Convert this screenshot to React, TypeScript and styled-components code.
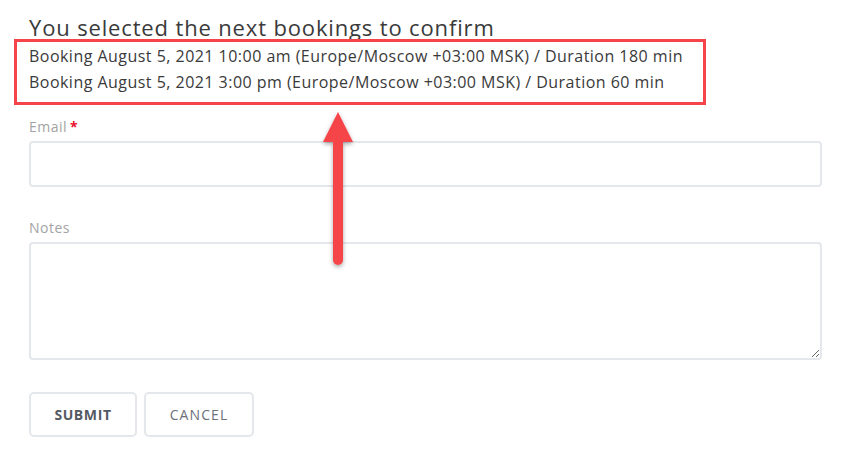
import React from "react";
import styled, { createGlobalStyle } from "styled-components";

const Global = createGlobalStyle`
  html, body { margin: 0; padding: 0; background: #ffffff; }
  body { font-family: "Open Sans", "Liberation Sans", sans-serif; color: #333; }
  * { box-sizing: border-box; }
`;

const Page = styled.div`
  position: relative;
  width: 843px;
  height: 451px;
  padding: 0 21px 0 29px;
  overflow: hidden;
`;

const Title = styled.h2`
  margin: 13px 0 0;
  font-size: 22px;
  line-height: 28px;
  font-weight: 400;
  letter-spacing: 0.85px;
  color: #3a3a3a;
`;

const Bookings = styled.div`
  position: relative;
  margin-top: 3px;
`;

const BookingLine = styled.div`
  font-size: 16px;
  line-height: 25.5px;
  letter-spacing: 0.47px;
  color: #3a3a3a;
  white-space: nowrap;
`;

const Highlight = styled.div`
  position: absolute;
  left: -15px;
  top: -5px;
  width: 692px;
  height: 66px;
  border: 3px solid #f5444a;
  pointer-events: none;
`;

const Label = styled.label<{ $gap: number }>`
  display: block;
  margin-top: ${(p) => p.$gap}px;
  font-size: 14px;
  line-height: 20px;
  letter-spacing: 0.5px;
  color: #a3a3a3;
`;

const Required = styled.span`
  color: #e8112d;
  font-weight: 700;
  margin-left: 3px;
`;

const TextInput = styled.input`
  display: block;
  width: 100%;
  height: 46px;
  margin-top: 4px;
  border: 2px solid #e4e7eb;
  border-radius: 4px;
  background: #fff;
  outline: none;
`;

const TextArea = styled.textarea`
  display: block;
  width: 100%;
  height: 118px;
  margin-top: 4px;
  border: 2px solid #e4e7eb;
  border-radius: 4px;
  background: #fff;
  outline: none;
  resize: vertical;
`;

const Actions = styled.div`
  display: flex;
  gap: 7px;
  margin-top: 32px;
`;

const Button = styled.button<{ $primary?: boolean }>`
  height: 45px;
  width: ${(p) => (p.$primary ? 108 : 110)}px;
  padding: 0;
  background: #fff;
  border: 2px solid #e4e7eb;
  border-radius: 5px;
  font-family: "Open Sans", "Liberation Sans", sans-serif;
  font-size: 14px;
  letter-spacing: ${(p) => (p.$primary ? 0.6 : 1.1)}px;
  font-weight: ${(p) => (p.$primary ? 700 : 400)};
  color: ${(p) => (p.$primary ? "#545a63" : "#6b7079")};
  text-transform: uppercase;
`;

const ArrowOverlay = styled.svg`
  position: absolute;
  left: 310px;
  top: 105px;
  overflow: visible;
`;

function Arrow() {
  return (
    <ArrowOverlay width="60" height="170" viewBox="0 0 60 170">
      <defs>
        <filter id="sh" x="-50%" y="-20%" width="200%" height="140%">
          <feDropShadow dx="0" dy="2" stdDeviation="2" floodColor="#000" floodOpacity="0.35" />
        </filter>
      </defs>
      <g filter="url(#sh)">
        <line x1="28" y1="30" x2="28" y2="155" stroke="#f5444a" strokeWidth="10" strokeLinecap="round" />
        <polygon points="28,7 43,37 13,37" fill="#f5444a" />
      </g>
    </ArrowOverlay>
  );
}

export default function App() {
  return (
    <>
      <Global />
      <Page>
        <Title>You selected the next bookings to confirm</Title>
        <Bookings>
          <BookingLine>Booking August 5, 2021 10:00 am (Europe/Moscow +03:00 MSK) / Duration 180 min</BookingLine>
          <BookingLine>Booking August 5, 2021 3:00 pm (Europe/Moscow +03:00 MSK) / Duration 60 min</BookingLine>
          <Highlight />
        </Bookings>
        <Label $gap={22}>
          Email<Required>*</Required>
        </Label>
        <TextInput type="email" />
        <Label $gap={31}>Notes</Label>
        <TextArea />
        <Actions>
          <Button $primary>Submit</Button>
          <Button>Cancel</Button>
        </Actions>
        <Arrow />
      </Page>
    </>
  );
}
